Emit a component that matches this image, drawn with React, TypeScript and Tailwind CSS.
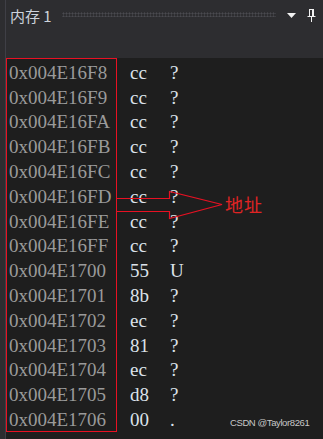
import React from "react";

const rows = [
    ["0x004E16F8", "cc", "?"],
    ["0x004E16F9", "cc", "?"],
    ["0x004E16FA", "cc", "?"],
    ["0x004E16FB", "cc", "?"],
    ["0x004E16FC", "cc", "?"],
    ["0x004E16FD", "cc", "?"],
    ["0x004E16FE", "cc", "?"],
    ["0x004E16FF", "cc", "?"],
    ["0x004E1700", "55", "U"],
    ["0x004E1701", "8b", "?"],
    ["0x004E1702", "ec", "?"],
    ["0x004E1703", "81", "?"],
    ["0x004E1704", "ec", "?"],
    ["0x004E1705", "d8", "?"],
    ["0x004E1706", "00", "."],
];

const mono = "font-['Liberation_Serif',serif] text-[19px] leading-none";

export default function App() {
    return (
        <div className="relative flex h-[439px] w-[323px] overflow-hidden bg-[#2d2d30]">
            {/* left edge */}
            <div className="w-[5px] shrink-0 bg-[#2d2d30]" />
            <div className="w-px shrink-0 bg-[#3f3f46]" />

            <div className="flex min-w-0 flex-1 flex-col">
                {/* tool window header */}
                <div className="flex h-[58px] shrink-0 items-start bg-[#2d2d30] pt-[6px]">
                    <span className="ml-[4px] font-['Noto_Sans_CJK_SC',sans-serif] text-[15px] leading-[20px] text-[#cdd3dc]">
                        内存 1
                    </span>
                    <div
                        className="ml-[10px] mt-[6px] h-[5px] w-[214px] bg-[radial-gradient(circle,#4a4a4f_45%,transparent_50%)] bg-[length:3px_3px]"
                    />
                    <svg className="ml-[11px] mt-[7px]" width="9" height="5" viewBox="0 0 9 5">
                        <path d="M0 0H9L4.5 5Z" fill="#f1f1f1" />
                    </svg>
                    <svg className="ml-[11px] mt-[3px]" width="9" height="13" viewBox="0 0 9 13">
                        <path
                            d="M2 0.5H7M2.5 0.5V7M6.5 0.5V7M0.5 7.5H8.5M4.5 7.5V13M5.5 1V7"
                            stroke="#f1f1f1"
                            strokeWidth="1"
                            fill="none"
                        />
                    </svg>
                </div>

                {/* memory contents */}
                <div className="flex flex-1 bg-[#1e1e1e]">
                    <div className="flex h-[374px] w-[111px] flex-col border border-[#e81123]">
                        {rows.map(([addr]) => (
                            <div
                                key={addr}
                                className={`flex h-[24.8px] items-center pl-[2px] pt-[2px] text-[#9a9a9a] ${mono}`}
                            >
                                {addr}
                            </div>
                        ))}
                    </div>
                    <div className="ml-[13px] flex w-[40px] flex-col pt-px">
                        {rows.map(([addr, hex]) => (
                            <div
                                key={addr}
                                className={`flex h-[24.8px] items-center pt-[2px] text-[#dce2ea] ${mono}`}
                            >
                                {hex}
                            </div>
                        ))}
                    </div>
                    <div className="flex flex-col pt-px">
                        {rows.map(([addr, , ch]) => (
                            <div
                                key={addr}
                                className={`flex h-[24.8px] items-center pt-[2px] text-[#dce2ea] ${mono}`}
                            >
                                {ch}
                            </div>
                        ))}
                    </div>
                </div>
            </div>

            {/* annotation */}
            <svg className="absolute left-0 top-0" width="323" height="439" viewBox="0 0 323 439">
                <path
                    d="M116.5 198.5H169.5V191.5L222 204.5L169.5 218.5V211.5H116.5"
                    stroke="#e81123"
                    strokeWidth="1.2"
                    fill="none"
                />
            </svg>
            <span className="absolute left-[225px] top-[194px] font-['Noto_Sans_CJK_SC',sans-serif] text-[18px] leading-[20px] tracking-[1px] text-[#e02424]">
                地址
            </span>
            <span className="absolute left-[230px] top-[417px] whitespace-nowrap font-['Liberation_Sans',sans-serif] text-[9.5px] leading-[12px] tracking-[-0.4px] text-[#c8c8c8]">
                CSDN @Taylor8261
            </span>
        </div>
    );
}
